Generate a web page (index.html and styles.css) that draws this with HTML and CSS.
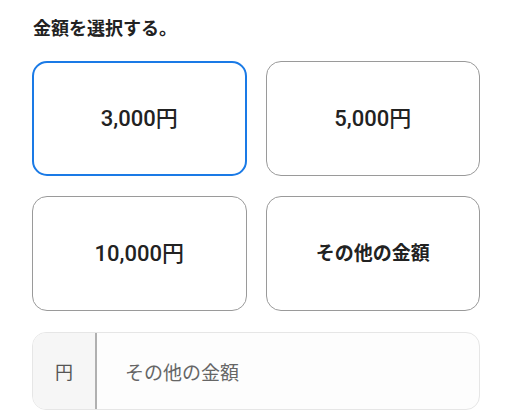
FILE: index.html
```html
<!DOCTYPE html>
<html lang="ja">
<head>
    <meta charset="UTF-8">
    <meta name="viewport" content="width=device-width, initial-scale=1.0">
    <title>金額を選択する</title>
    <link rel="stylesheet" href="styles.css">
</head>
<body>
    <div class="container">
        <h3 class="title">金額を選択する。</h3>

        <!-- Amount options -->
        <div class="amount-grid">
            <button class="amount-btn selected">3,000円</button>
            <button class="amount-btn">5,000円</button>
            <button class="amount-btn">10,000円</button>
            <button class="amount-btn other">その他の金額</button>
        </div>

        <!-- Other amount input -->
        <div class="amount-input">
            <span class="unit">円</span>
            <input type="text" placeholder="その他の金額">
        </div>
    </div>
</body>
</html>
```

FILE: styles.css
```css
body {
    font-family: "Noto Sans CJK JP", "Noto Sans", sans-serif;
    margin: 0;
    padding: 0;
    background-color: #ffffff;
    color: #222;
}
.container {
    width: 448px;
    padding: 14px 32px 0;
}
.title {
    margin: 0 0 21px;
    padding-left: 1px;
    font-size: 18px;
    font-weight: 700;
    line-height: 26px;
    color: #222;
}
.amount-grid {
    display: grid;
    grid-template-columns: 1fr 1fr;
    gap: 20px 19px;
}
.amount-btn {
    height: 115px;
    padding: 0;
    background: #fff;
    border: 1.5px solid #9a9a9a;
    border-radius: 15px;
    font-family: Roboto, "Noto Sans CJK JP", sans-serif;
    font-size: 22px;
    font-weight: 500;
    line-height: 1;
    color: #222;
    cursor: pointer;
}
.amount-btn.selected {
    border: 2px solid #1a7ae6;
}
.amount-btn.other {
    padding-bottom: 4px;
    font-family: "Noto Sans CJK JP", sans-serif;
    font-size: 19px;
    font-weight: 700;
}
.amount-input {
    display: flex;
    height: 76px;
    margin-top: 21px;
    border: 1px solid #e6e6e6;
    border-radius: 14px;
    overflow: hidden;
    background: #fdfdfd;
}
.unit {
    width: 62px;
    display: flex;
    align-items: center;
    justify-content: center;
    background: #f6f6f6;
    border-right: 2px solid #b0b0b0;
    font-size: 18px;
    color: #555;
}
.amount-input input {
    flex: 1;
    border: none;
    outline: none;
    background: transparent;
    padding: 0 0 0 28px;
    font-family: "Noto Sans CJK JP", sans-serif;
    font-size: 19px;
}
.amount-input input::placeholder {
    color: #666;
}
```
